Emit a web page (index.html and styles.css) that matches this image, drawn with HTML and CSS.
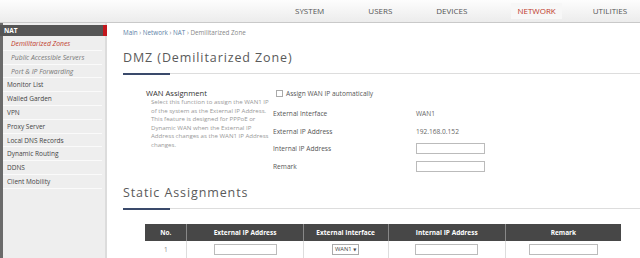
FILE: index.html
```html
<!DOCTYPE html>
<html lang="en">
<head>
  <meta charset="UTF-8">
  <meta name="viewport" content="width=device-width, initial-scale=1.0">
  <title>DMZ (Demilitarized Zone)</title>
  <link rel="stylesheet" href="styles.css">
</head>
<body>

  <div class="topbar">
    <nav class="topnav">
      <a href="#">System</a>
      <a href="#">Users</a>
      <a href="#">Devices</a>
      <a href="#" class="active">Network</a>
      <a href="#">Utilities</a>
    </nav>
  </div>

  <div class="page">
    <aside class="sidebar">
      <div class="side-head">NAT</div>
      <a href="#" class="side-item sub current">Demilitarized Zones</a>
      <a href="#" class="side-item sub">Public Accessible Servers</a>
      <a href="#" class="side-item sub">Port &amp; IP Forwarding</a>
      <a href="#" class="side-item">Monitor List</a>
      <a href="#" class="side-item">Walled Garden</a>
      <a href="#" class="side-item">VPN</a>
      <a href="#" class="side-item">Proxy Server</a>
      <a href="#" class="side-item">Local DNS Records</a>
      <a href="#" class="side-item">Dynamic Routing</a>
      <a href="#" class="side-item">DDNS</a>
      <a href="#" class="side-item">Client Mobility</a>
    </aside>

    <main class="content">
      <div class="crumbs">
        <a href="#">Main</a> › <a href="#">Network</a> › <a href="#">NAT</a> › Demilitarized Zone
      </div>

      <h1 class="section-title">DMZ (Demilitarized Zone)</h1>
      <div class="rule"></div>

      <div class="wan">
        <div class="wan-info">
          <div class="wan-label">WAN Assignment</div>
          <p class="wan-desc">Select this function to assign the WAN1 IP of the system as the External IP Address. This feature is designed for PPPoE or Dynamic WAN when the External IP Address changes as the WAN1 IP Address changes.</p>
        </div>
        <div class="wan-form">
          <label class="check-row"><span class="checkbox"></span> Assign WAN IP automatically</label>
          <div class="field first"><span class="f-label">External Interface</span><span class="f-value">WAN1</span></div>
          <div class="field"><span class="f-label">External IP Address</span><span class="f-value">192.168.0.152</span></div>
          <div class="field"><span class="f-label">Internal IP Address</span><input type="text" class="box"></div>
          <div class="field"><span class="f-label">Remark</span><input type="text" class="box"></div>
        </div>
      </div>

      <h2 class="section-title static">Static Assignments</h2>
      <div class="rule"></div>

      <table class="grid">
        <thead>
          <tr>
            <th class="c-no">No.</th>
            <th class="c-ext">External IP Address</th>
            <th class="c-if">External Interface</th>
            <th class="c-int">Internal IP Address</th>
            <th class="c-rem">Remark</th>
          </tr>
        </thead>
        <tbody>
          <tr>
            <td class="num">1</td>
            <td><input type="text" class="box"></td>
            <td><span class="select">WAN1 <span class="caret">▼</span></span></td>
            <td><input type="text" class="box"></td>
            <td><input type="text" class="box wide"></td>
          </tr>
        </tbody>
      </table>
    </main>
  </div>

</body>
</html>
```

FILE: styles.css
```css
body {
  margin: 0;
  font-family: 'Open Sans', 'DejaVu Sans', sans-serif;
  background: #fff;
  color: #444;
  overflow: hidden;
}

a {
  text-decoration: none;
  color: inherit;
}

.topbar {
  height: 22px;
  background: linear-gradient(to bottom, #fdfdfd, #ececec);
  border-bottom: 1px solid #c9c9c9;
}

.topnav {
  display: flex;
  padding-left: 295px;
  gap: 44px;
  height: 22px;
  align-items: center;
}

.topnav a {
  font-size: 8px;
  text-transform: uppercase;
  color: #555;
  line-height: 16px;
}

.topnav a.active {
  color: #c0392b;
  background: #f7f7f7;
  padding: 0 6px;
  margin-left: 0;
  margin-right: -13px;
}

.page {
  display: flex;
  min-height: 235px;
}

.sidebar {
  width: 102px;
  background: #eeeeee;
  border-left: 3px solid #6a6a6a;
  border-right: 2px solid #dcdcdc;
  padding-top: 2px;
  display: flex;
  flex-direction: column;
}

.side-head {
  background: #555;
  color: #fff;
  font-size: 6.5px;
  font-weight: bold;
  height: 11px;
  line-height: 11px;
  padding-left: 4px;
  border-right: 4px solid #c4161c;
  margin-left: -3px;
  margin-right: -2px;
  margin-bottom: 1px;
}

.side-item {
  font-size: 6.5px;
  color: #444;
  height: 12.8px;
  line-height: 13px;
  padding-left: 4px;
  border-bottom: 1px solid #fafafa;
  margin-right: 3px;
}

.side-item.sub {
  font-style: italic;
  font-size: 6.8px;
  color: #777;
  padding-left: 8px;
}

.side-item.current {
  color: #c0392b;
}

.content {
  flex: 1;
  padding-left: 16px;
}

.crumbs {
  font-size: 6.3px;
  color: #888;
  margin-top: 5px;
}

.crumbs a {
  color: #5b7fa6;
}

.section-title {
  font-size: 12.5px;
  font-weight: normal;
  letter-spacing: 0.9px;
  color: #5a5a5a;
  margin: 12px 0 0;
  line-height: 18px;
}

.section-title.static {
  margin-top: 9px;
}

.rule {
  height: 1px;
  background: #ddd;
  margin-top: 7px;
}

.rule::before {
  content: "";
  display: block;
  width: 47px;
  height: 2px;
  background: #3a4a6b;
  margin-top: -1px;
}

.wan {
  display: flex;
  margin-top: 14px;
}

.wan-info {
  width: 127px;
  padding-left: 23px;
}

.wan-label {
  font-size: 7.6px;
  color: #333;
  line-height: 10px;
}

.wan-desc {
  font-size: 6.1px;
  color: #999;
  margin: 0 0 0 5px;
  width: 118px;
  line-height: 8.6px;
}

.wan-form {
  flex: 1;
}

.check-row {
  font-size: 6.6px;
  color: #555;
  display: flex;
  align-items: center;
  gap: 3px;
  height: 10px;
  padding-left: 3px;
}

.checkbox {
  width: 5px;
  height: 5px;
  border: 1px solid #aaa;
  background: #fff;
}

.field {
  display: flex;
  align-items: center;
  height: 17.5px;
  font-size: 6.6px;
  color: #555;
}

.field.first {
  margin-top: 7px;
}

.f-label {
  width: 143px;
}

.f-value {
  color: #666;
}

.box {
  width: 67px;
  height: 9px;
  border: 1px solid #bbb;
  padding: 0;
  margin: 0;
  background: #fff;
}

.grid {
  margin: 15px 0 0 22px;
  width: 476px;
  border-collapse: collapse;
  font-size: 6.5px;
}

.grid th {
  background: #474747;
  color: #fff;
  font-weight: bold;
  height: 17px;
  border-left: 1px solid #888;
  padding: 0;
}

.grid th:first-child {
  border-left: none;
}

.grid td {
  text-align: center;
  height: 17px;
  border-left: 1px solid #ddd;
  color: #777;
  padding: 0;
}

.grid td:first-child {
  border-left: none;
}

.grid td.num {
  color: #888;
}

.c-no { width: 42px; }
.c-ext { width: 116px; }
.c-if { width: 85px; }
.c-int { width: 117px; }
.c-rem { width: 116px; }

.grid .box {
  width: 61px;
  vertical-align: middle;
}

.grid .box.wide {
  width: 67px;
}

.select {
  display: inline-block;
  border: 1px solid #aaa;
  padding: 0 2px;
  font-size: 5.8px;
  line-height: 8px;
  color: #444;
}

.caret {
  font-size: 4px;
}
```
